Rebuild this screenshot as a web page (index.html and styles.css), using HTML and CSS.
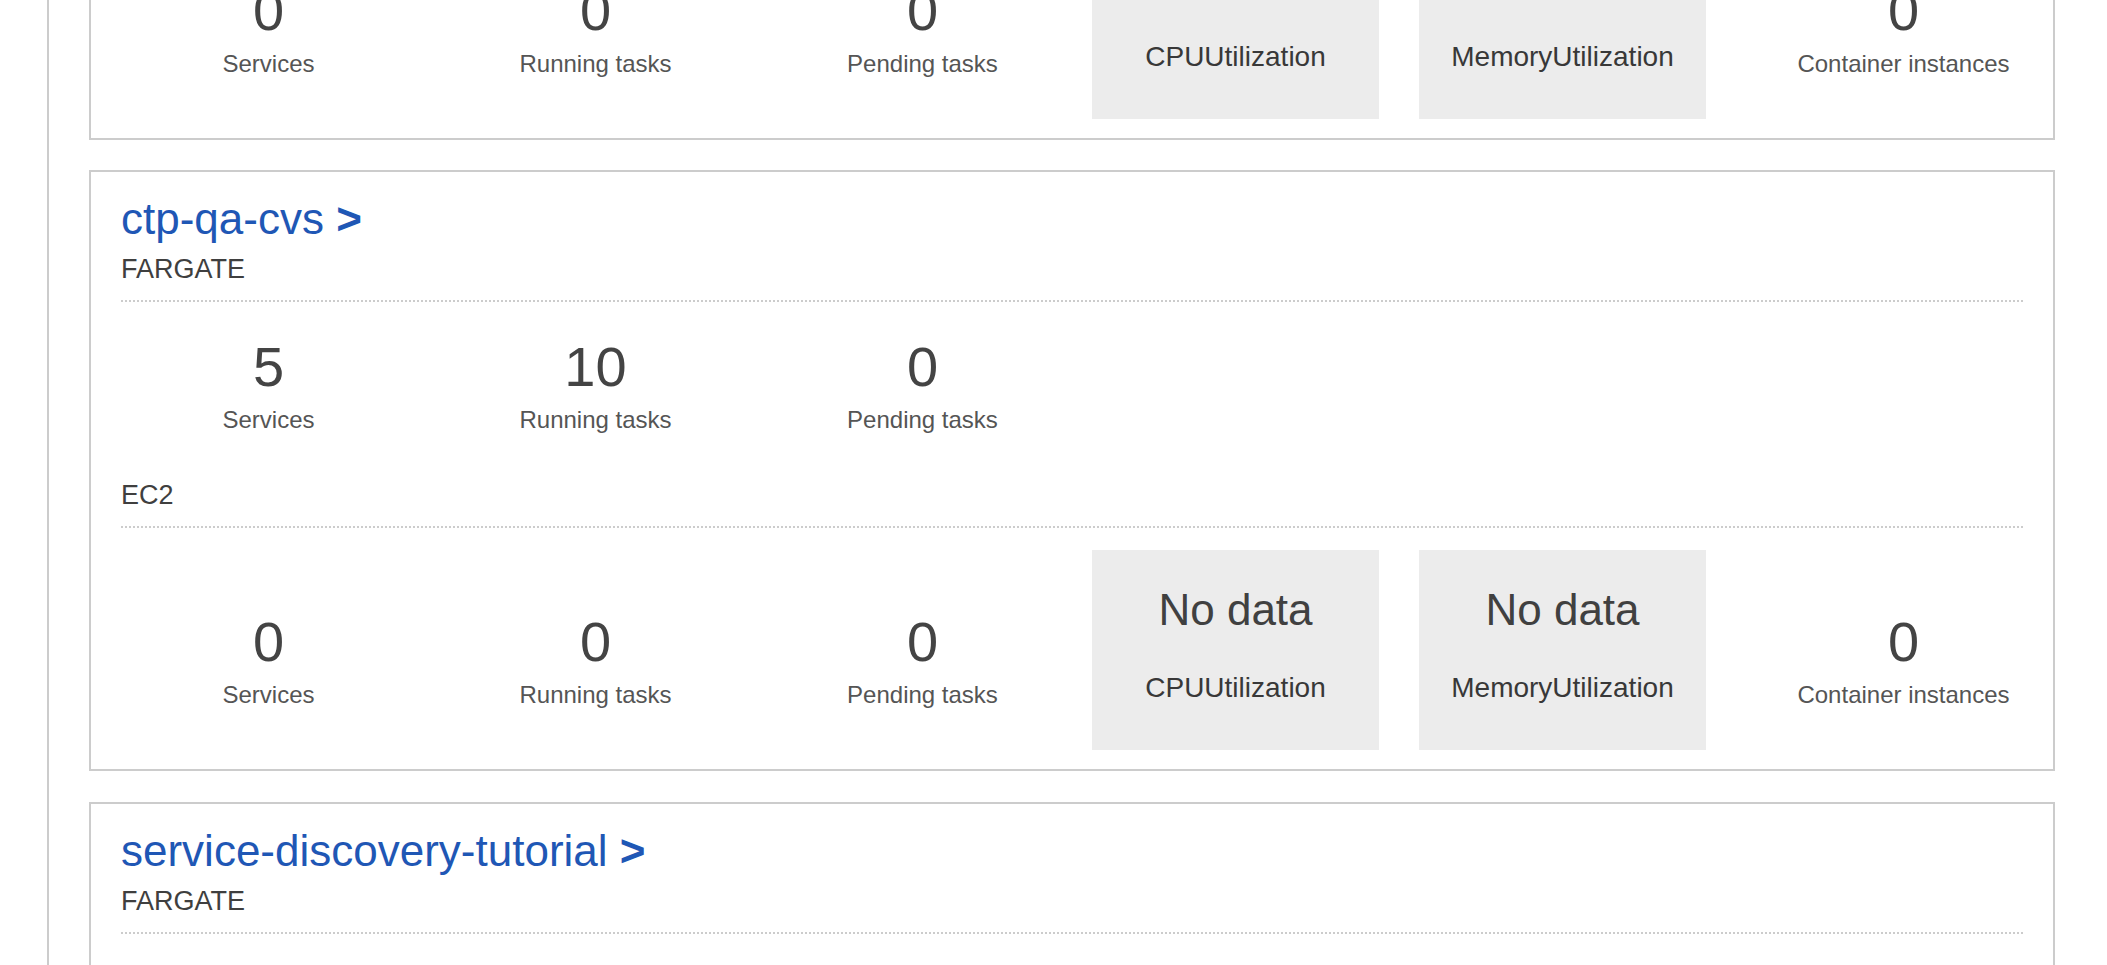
FILE: index.html
```html
<!DOCTYPE html>
<html lang="en">
<head>
<meta charset="utf-8">
<title>ECS Clusters</title>
<link rel="stylesheet" href="styles.css">
</head>
<body>
<div class="page">
  <aside class="rail"></aside>
  <main class="main">
    <div class="cluster-list">
      <section class="card card--partial">
        <div class="stats stats--ec2">
          <div class="stat"><div class="stat-value">0</div><div class="stat-label">Services</div></div>
          <div class="stat"><div class="stat-value">0</div><div class="stat-label">Running tasks</div></div>
          <div class="stat"><div class="stat-value">0</div><div class="stat-label">Pending tasks</div></div>
          <div class="metric"><div class="metric-value"></div><div class="metric-label">CPUUtilization</div></div>
          <div class="metric"><div class="metric-value"></div><div class="metric-label">MemoryUtilization</div></div>
          <div class="stat stat--instances"><div class="stat-value">0</div><div class="stat-label">Container instances</div></div>
        </div>
      </section>

      <section class="card">
        <a class="cluster-name" href="#">ctp-qa-cvs <span class="chevron">&gt;</span></a>
        <div class="launch-type">FARGATE</div>
        <div class="stats">
          <div class="stat"><div class="stat-value">5</div><div class="stat-label">Services</div></div>
          <div class="stat"><div class="stat-value">10</div><div class="stat-label">Running tasks</div></div>
          <div class="stat"><div class="stat-value">0</div><div class="stat-label">Pending tasks</div></div>
        </div>
        <div class="launch-type launch-type--ec2">EC2</div>
        <div class="stats stats--ec2">
          <div class="stat"><div class="stat-value">0</div><div class="stat-label">Services</div></div>
          <div class="stat"><div class="stat-value">0</div><div class="stat-label">Running tasks</div></div>
          <div class="stat"><div class="stat-value">0</div><div class="stat-label">Pending tasks</div></div>
          <div class="metric"><div class="metric-value">No data</div><div class="metric-label">CPUUtilization</div></div>
          <div class="metric"><div class="metric-value">No data</div><div class="metric-label">MemoryUtilization</div></div>
          <div class="stat stat--instances"><div class="stat-value">0</div><div class="stat-label">Container instances</div></div>
        </div>
      </section>

      <section class="card">
        <a class="cluster-name" href="#">service-discovery-tutorial <span class="chevron">&gt;</span></a>
        <div class="launch-type">FARGATE</div>
        <div class="stats">
          <div class="stat"><div class="stat-value">0</div><div class="stat-label">Services</div></div>
          <div class="stat"><div class="stat-value">0</div><div class="stat-label">Running tasks</div></div>
          <div class="stat"><div class="stat-value">0</div><div class="stat-label">Pending tasks</div></div>
        </div>
      </section>
    </div>
  </main>
</div>
</body>
</html>
```

FILE: styles.css
```css
html, body {
  margin: 0;
  padding: 0;
  height: 100%;
  overflow: hidden;
  background: #fff;
}

body {
  font-family: "Liberation Sans", Arial, sans-serif;
  color: #444;
}

.page {
  display: flex;
  min-height: 100vh;
}

.rail {
  flex: none;
  width: 47px;
  border-right: 2px solid #ccc;
}

.main {
  flex: 1;
  min-width: 0;
  padding: 0 52px 0 40px;
}

.cluster-list {
  margin-top: -105px;
}

.card {
  border: 2px solid #ccc;
  padding: 22px 30px 0;
  margin-bottom: 31px;
  background: #fff;
}

.card--partial {
  padding-top: 0;
  margin-bottom: 30px;
}

.cluster-name {
  display: block;
  font-size: 44px;
  line-height: 50px;
  color: #1f57b5;
  text-decoration: none;
}

.chevron {
  font-weight: bold;
}

.launch-type {
  margin-top: 9px;
  padding-bottom: 15px;
  border-bottom: 2px dotted #ccc;
  font-size: 27px;
  line-height: 32px;
  color: #3f3f3f;
}

.launch-type--ec2 {
  margin-top: 26px;
}

.stats {
  display: flex;
  align-items: flex-start;
  margin: 0 -60px 0 -16px;
  padding: 22px 0 19px;
}

.stat {
  flex: none;
  width: 327px;
  padding-top: 11px;
  text-align: center;
}

.stats--ec2 .stat {
  padding-top: 60px;
}

.stat--instances {
  margin-left: 34px;
}

.stat-value {
  font-size: 56px;
  line-height: 64px;
  color: #444;
}

.stat-label {
  margin-top: 7px;
  font-size: 24px;
  line-height: 28px;
  color: #555;
}

.metric {
  flex: none;
  box-sizing: border-box;
  width: 287px;
  height: 200px;
  margin-left: 6px;
  padding-top: 34px;
  background: #ececec;
  text-align: center;
}

.metric + .metric {
  margin-left: 40px;
}

.metric-value {
  height: 52px;
  font-size: 44px;
  line-height: 52px;
  color: #404040;
}

.metric-label {
  margin-top: 36px;
  font-size: 28px;
  line-height: 32px;
  color: #383838;
}
```
